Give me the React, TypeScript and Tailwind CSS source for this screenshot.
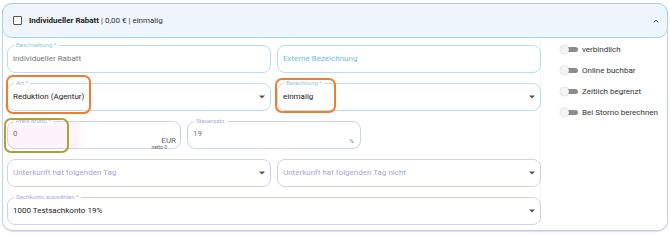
import type { ReactNode } from 'react';

const TEAL = { border: 'border-[#b9dde9]', label: 'text-[#8ec7dd]' };
const LAV = { border: 'border-[#cfd1ee]', label: 'text-[#a8abd8]' };

type Tone = typeof TEAL;

function Caret() {
  return (
    <svg width="6" height="4" viewBox="0 0 6 4" className="absolute right-[5px] top-1/2 -translate-y-1/2">
      <path d="M0 0.5h6L3 3.5z" fill="#555" />
    </svg>
  );
}

function Field({
  label,
  tone,
  children,
  select,
  className,
}: {
  label?: string;
  tone: Tone;
  children?: ReactNode;
  select?: boolean;
  className?: string;
}) {
  return (
    <div className={`relative h-[28px] rounded-[8px] border ${tone.border} bg-white flex items-center pl-[5px] ${className ?? ''}`}>
      {label && (
        <span className={`absolute -top-[5px] left-[6px] bg-white px-[2px] text-[6px] leading-[8px] ${tone.label}`}>
          {label}
        </span>
      )}
      {children}
      {select && <Caret />}
    </div>
  );
}

function Toggle({ label }: { label: string }) {
  return (
    <div className="h-[21px] flex items-center">
      <div className="relative w-[19px] h-[9px]">
        <div className="absolute left-[6px] top-[2px] w-[12px] h-[5px] rounded-r-full bg-[#8d8d8d]" />
        <div className="absolute left-0 top-0 w-[9px] h-[9px] rounded-full bg-[#f4f4f4] shadow-[0_0_1px_rgba(0,0,0,0.35)]" />
      </div>
      <span className="ml-[3px] text-[8px] text-[#333]">{label}</span>
    </div>
  );
}

export default function App() {
  return (
    <div className="relative w-[670px] h-[235px] bg-white pt-[3px] px-[2px] font-['Roboto','Liberation_Sans',sans-serif]">
      <div className="w-[666px] h-[228px] rounded-[10px] border border-[#bfd5ea] border-b-[#c6c9e9] shadow-[0_1px_1px_rgba(160,165,220,0.35)] flex flex-col">
        {/* header */}
        <div className="-mx-px -mt-px h-[35px] shrink-0 rounded-[10px] border border-[#a4d3e6] bg-[#eef6fb] flex items-center pl-[10px] pr-[8px]">
          <div className="w-[9px] h-[9px] border border-[#555] rounded-[1px] bg-white" />
          <span className="ml-[7px] text-[8px] text-[#333]">
            <span className="font-bold text-[#222]">Individueller Rabatt</span> | 0,00 € | einmalig
          </span>
          <svg width="6" height="4" viewBox="0 0 6 4" className="ml-auto">
            <path d="M0.8 3.3 3 1.1 5.2 3.3" fill="none" stroke="#666" strokeWidth="1" />
          </svg>
        </div>

        {/* body */}
        <div className="flex flex-1">
          <div className="w-[538px] pl-[4px] pt-[7px] flex flex-col gap-[10px] border-r border-[#f4f5f9]">
            <div className="grid grid-cols-2 gap-[6px] w-[534px]">
              <Field label="Beschreibung *" tone={TEAL}>
                <span className="text-[8px] text-[#777]">individueller Rabatt</span>
              </Field>
              <Field tone={TEAL}>
                <span className="text-[8px] text-[#78bdd9]">Externe Bezeichnung</span>
              </Field>
            </div>
            <div className="grid grid-cols-2 gap-[6px] w-[534px]">
              <Field label="Art *" tone={TEAL} select>
                <span className="text-[8px] text-[#222]">Reduktion (Agentur)</span>
              </Field>
              <Field label="Berechnung *" tone={TEAL} select>
                <span className="text-[8px] text-[#222]">einmalig</span>
              </Field>
            </div>
            <div className="grid grid-cols-3 gap-[6px] w-[534px]">
              <Field label="Preis brutto *" tone={LAV} className="bg-gradient-to-r from-[#fdf3fb] from-40% to-white to-45%">
                <span className="text-[8px] text-[#777] -mt-[3px]">0</span>
                <span className="absolute right-[4px] top-[14px] text-[8px] leading-[9px] text-[#666]">EUR</span>
                <span className="absolute right-[13px] top-[22px] text-[5px] leading-[6px] text-[#666]">netto 0</span>
              </Field>
              <Field label="Steuersatz" tone={LAV}>
                <span className="text-[8px] text-[#777] -mt-[3px]">19</span>
                <span className="absolute right-[6px] top-[15px] text-[6px] leading-[7px] text-[#777]">%</span>
              </Field>
            </div>
            <div className="grid grid-cols-2 gap-[6px] w-[534px]">
              <Field tone={LAV} select>
                <span className="text-[8px] text-[#a3a7d6]">Unterkunft hat folgenden Tag</span>
              </Field>
              <Field tone={LAV} select>
                <span className="text-[8px] text-[#a3a7d6]">Unterkunft hat folgenden Tag nicht</span>
              </Field>
            </div>
            <Field label="Sachkonto auswählen *" tone={LAV} select className="w-[534px]">
              <span className="text-[8px] text-[#222]">1000 Testsachkonto 19%</span>
            </Field>
          </div>

          <div className="pl-[19px] pt-[1px] flex flex-col">
            <Toggle label="verbindlich" />
            <Toggle label="Online buchbar" />
            <Toggle label="Zeitlich begrenzt" />
            <Toggle label="Bei Storno berechnen" />
          </div>
        </div>
      </div>

      {/* annotation highlights */}
      <div className="absolute left-[6px] top-[75px] w-[85px] h-[39px] rounded-[7px] border-2 border-[#f07c2e]" />
      <div className="absolute left-[275px] top-[78px] w-[61px] h-[35px] rounded-[7px] border-2 border-[#f07c2e]" />
      <div className="absolute left-[4px] top-[118px] w-[65px] h-[35px] rounded-[7px] border-2 border-[#a9a236]" />
    </div>
  );
}
